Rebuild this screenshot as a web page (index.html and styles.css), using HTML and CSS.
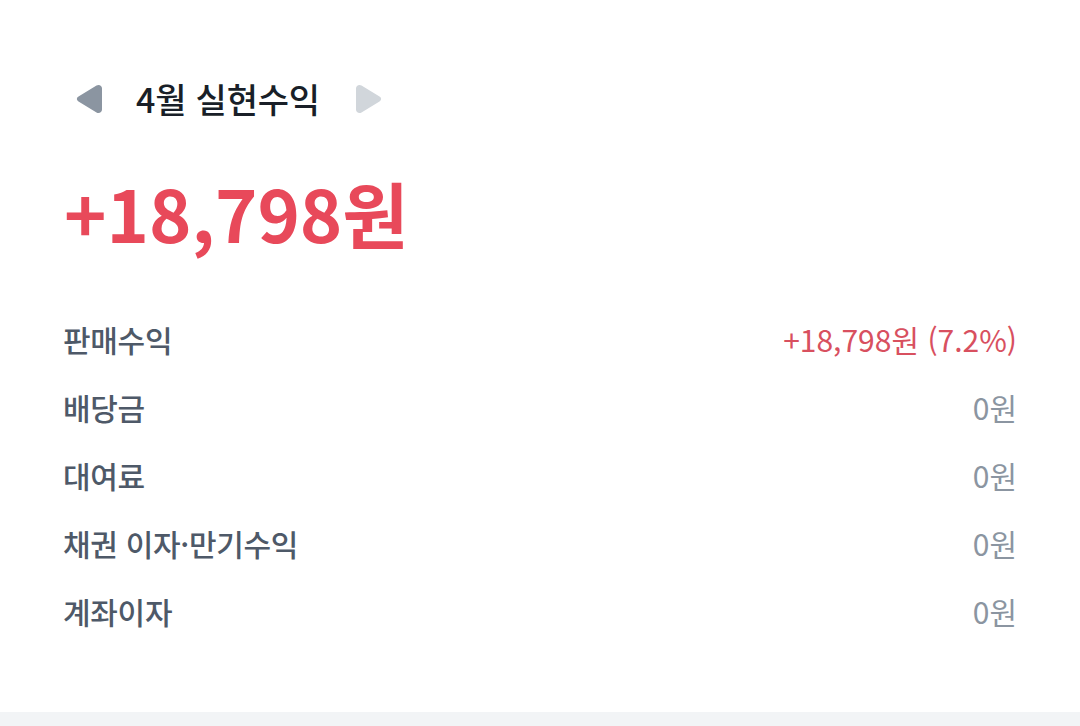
FILE: index.html
```html
<!DOCTYPE html>
<html lang="ko">
<head>
<meta charset="utf-8">
<link rel="stylesheet" href="styles.css">
</head>
<body>
<main class="card">
  <header class="month-nav">
    <button class="nav-btn prev" aria-label="이전 달">
      <svg width="30" height="32" viewBox="0 0 30 32"><path d="M4.5 13.6 L22.5 2.6 C25 1.1 28 2.7 28 5.6 V26.4 C28 29.3 25 30.9 22.5 29.4 L4.5 18.4 C2.3 17.1 2.3 14.9 4.5 13.6 Z" fill="#8b95a1"/></svg>
    </button>
    <h1 class="title">4월 실현수익</h1>
    <button class="nav-btn next" aria-label="다음 달">
      <svg width="30" height="32" viewBox="0 0 30 32"><path d="M25.5 13.6 L7.5 2.6 C5 1.1 2 2.7 2 5.6 V26.4 C2 29.3 5 30.9 7.5 29.4 L25.5 18.4 C27.7 17.1 27.7 14.9 25.5 13.6 Z" fill="#d1d6db"/></svg>
    </button>
  </header>

  <div class="total">+18,798원</div>

  <ul class="rows">
    <li class="row"><span class="label">판매수익</span><span class="value red">+18,798원 (7.2%)</span></li>
    <li class="row"><span class="label">배당금</span><span class="value">0원</span></li>
    <li class="row"><span class="label">대여료</span><span class="value">0원</span></li>
    <li class="row"><span class="label">채권 이자·만기수익</span><span class="value">0원</span></li>
    <li class="row"><span class="label">계좌이자</span><span class="value">0원</span></li>
  </ul>
</main>
<div class="divider"></div>
</body>
</html>
```

FILE: styles.css
```css
* { box-sizing: border-box; }
html, body { margin: 0; padding: 0; background: #ffffff; }
body {
  font-family: "Noto Sans CJK KR", "Noto Sans", sans-serif;
  width: 1080px;
  height: 726px;
  overflow: hidden;
}
.card {
  height: 712px;
  padding: 81px 63px 0 63px;
}
.month-nav {
  display: flex;
  align-items: center;
  height: 36px;
  padding-left: 11px;
}
.nav-btn {
  border: 0;
  background: none;
  padding: 0;
  margin: 0;
  display: flex;
  width: 30px;
  height: 32px;
}
.title {
  margin: 0 0 0 32px;
  font-size: 34px;
  font-weight: 500;
  color: #191f28;
  line-height: 36px;
  width: 218px;
  letter-spacing: -0.2px;
}
.total {
  margin-top: 55px;
  font-size: 72px;
  font-weight: 700;
  color: #e8495a;
  line-height: 80px;
  letter-spacing: 0;
  padding-left: 1px;
}
.rows {
  list-style: none;
  margin: 66px 0 0 0;
  padding: 0;
  display: flex;
  flex-direction: column;
  gap: 26px;
}
.row {
  display: flex;
  justify-content: space-between;
  align-items: center;
  height: 42px;
  font-size: 30px;
}
.label {
  color: #4e5968;
  font-weight: 500;
  letter-spacing: -0.3px;
}
.value {
  color: #8b95a1;
  font-weight: 400;
  letter-spacing: 0;
}
.value.red { color: #d8505f; }
.divider {
  height: 14px;
  background: #f2f4f6;
}
```
